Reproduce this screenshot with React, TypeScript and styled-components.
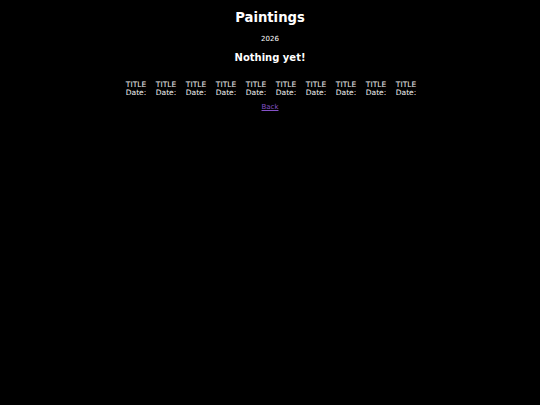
import styled, { createGlobalStyle } from "styled-components";

const GlobalStyle = createGlobalStyle`
  html, body {
    margin: 0;
    background: #000;
    color: #fff;
    font-family: "DejaVu Sans", Verdana, sans-serif;
  }
`;

const Page = styled.div`
  display: flex;
  flex-direction: column;
  align-items: center;
  padding-top: 10px;
  min-height: 405px;
  box-sizing: border-box;
`;

const Title = styled.h1`
  margin: 0;
  font-size: 13.2px;
  line-height: 16px;
  font-weight: bold;
`;

const Year = styled.p`
  margin: 9px 0 0;
  font-size: 7px;
  line-height: 8px;
`;

const Empty = styled.h2`
  margin: 8px 0 0;
  font-size: 10px;
  line-height: 13px;
  font-weight: bold;
`;

const Grid = styled.div`
  display: flex;
  margin-top: 17px;
  padding-left: 2px;
`;

const Item = styled.div`
  width: 30px;
  display: flex;
  flex-direction: column;
  align-items: center;
  font-size: 7.5px;
  line-height: 8px;
  color: #f2f2f2;
`;

const BackLink = styled.a`
  margin-top: 6px;
  font-size: 7px;
  line-height: 8px;
  color: #8552c8;
`;

const items = Array.from({ length: 10 }, (_, i) => i);

export default function App() {
  return (
    <>
      <GlobalStyle />
      <Page>
        <Title>Paintings</Title>
        <Year>2026</Year>
        <Empty>Nothing yet!</Empty>
        <Grid>
          {items.map((i) => (
            <Item key={i}>
              <span>TITLE</span>
              <span>Date:</span>
            </Item>
          ))}
        </Grid>
        <BackLink href="#">Back</BackLink>
      </Page>
    </>
  );
}
